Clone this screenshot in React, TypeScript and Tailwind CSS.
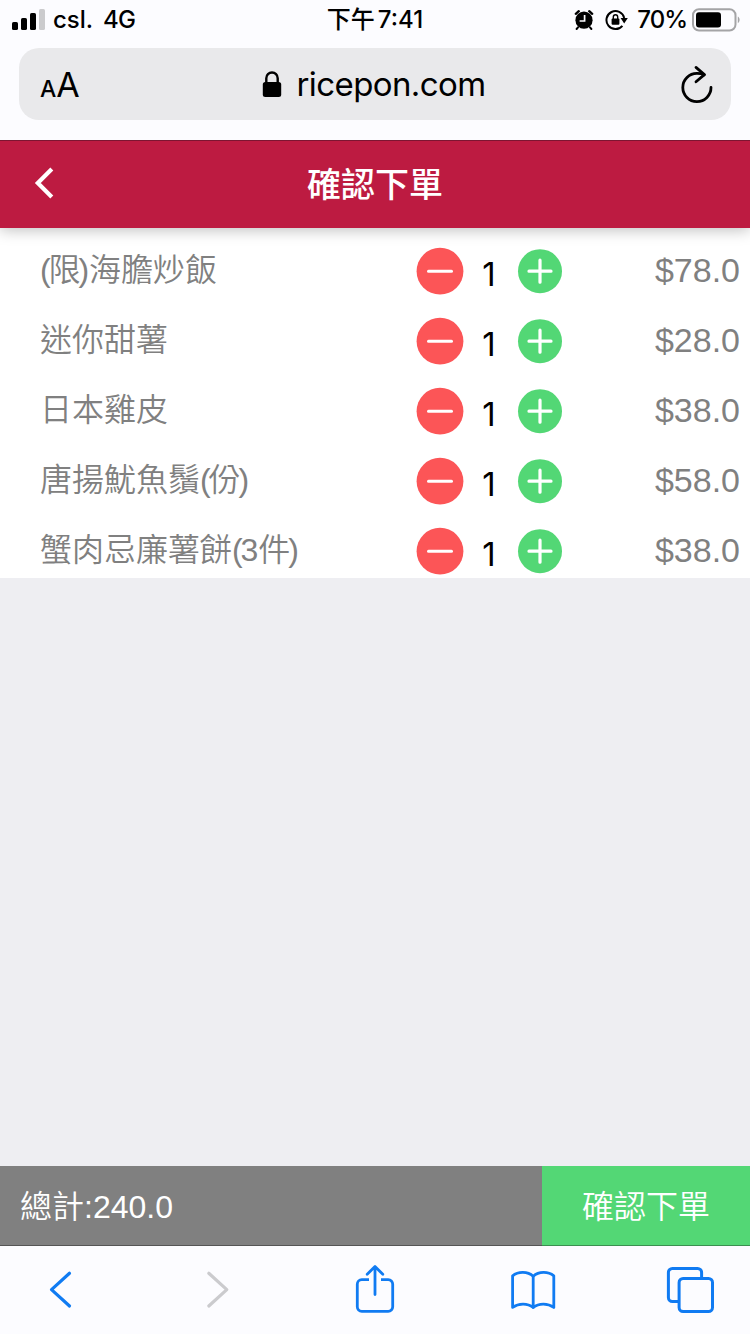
type OrderItem = {
  id: number;
  name: string;
  qty: number;
  price: number;
};

const items: OrderItem[] = [
  { id: 1, name: "(限)海膽炒飯", qty: 1, price: 78 },
  { id: 2, name: "迷你甜薯", qty: 1, price: 28 },
  { id: 3, name: "日本雞皮", qty: 1, price: 38 },
  { id: 4, name: "唐揚魷魚鬚(份)", qty: 1, price: 58 },
  { id: 5, name: "蟹肉忌廉薯餅(3件)", qty: 1, price: 38 },
];

function StatusBar() {
  return (
    <div className="grid h-10 grid-cols-3 items-center text-2xl font-medium text-black">
      <div className="flex items-center pl-3">
        <svg width="34" height="22" viewBox="0 0 34 22" className="shrink-0">
          <rect x="0" y="13" width="6" height="8" rx="1.6" />
          <rect x="9" y="9" width="6" height="12" rx="1.6" />
          <rect x="18" y="4" width="6" height="17" rx="1.6" />
          <rect x="27" y="0" width="6" height="21" rx="1.6" fill="#cbcbcd" />
        </svg>
        <span className="ml-[7px]">csl.</span>
        <span className="ml-2.5 tracking-[-0.8px]">4G</span>
      </div>
      <div className="flex items-center justify-center">
        <span>下午</span>
        <span className="ml-[3px]">7:41</span>
      </div>
      <div className="flex items-center justify-end pr-[9px]">
        <svg width="20" height="22" viewBox="0 0 20 22" className="mr-[11px] shrink-0">
          <circle cx="10" cy="11.2" r="8.6" />
          <path d="M1.8 4.8 4.8 2.2M18.2 4.8 15.2 2.2" stroke="#000" strokeWidth="2.4" strokeLinecap="round" />
          <path d="m4 18.4-1.4 1.6M16 18.4l1.4 1.6" stroke="#000" strokeWidth="2" strokeLinecap="round" />
          <path d="M10.6 6v6H5.6" fill="none" stroke="#fcfcff" strokeWidth="1.7" />
        </svg>
        <svg width="23" height="22" viewBox="0 0 23 22" className="mr-[9px] shrink-0">
          <path d="M17.4 16.8A9 9 0 1 1 19.2 8.9" fill="none" stroke="#000" strokeWidth="2" />
          <path d="M15.6 9h7.2L19.2 14.6z" />
          <rect x="6.6" y="9.6" width="7.8" height="6.2" rx="1" />
          <path d="M8.3 10V8a2.2 2.2 0 0 1 4.4 0v2" fill="none" stroke="#000" strokeWidth="1.4" />
        </svg>
        <span className="tracking-[-1px]">70%</span>
        <svg width="49" height="24" viewBox="0 0 49 24" className="ml-[5px] shrink-0">
          <rect x="1" y="1.2" width="42.5" height="21.3" rx="6" fill="none" stroke="#a4a4a6" strokeWidth="2" />
          <rect x="4" y="4.2" width="25" height="15.4" rx="3" />
          <path d="M45.8 8.5c2.4 1.2 2.4 5.5 0 6.7z" fill="#a4a4a6" />
        </svg>
      </div>
    </div>
  );
}

function AddressBar() {
  return (
    <div className="mx-[19px] mt-2 flex h-[72px] items-center justify-between rounded-[20px] bg-[#e9e9eb] pr-[17px] pl-[21px] text-black">
      <div className="flex w-[60px] items-baseline pt-0.5 leading-none">
        <span className="text-[23px] font-medium">A</span>
        <span className="text-[34px]">A</span>
      </div>
      <div className="flex items-center">
        <svg width="20" height="28" viewBox="0 0 20 28" className="mr-[15px]">
          <rect x="0.8" y="12" width="18.4" height="15" rx="2.5" />
          <path d="M4.3 13V8.2a5.7 5.7 0 0 1 11.4 0V13" fill="none" stroke="#000" strokeWidth="2.4" />
        </svg>
        <span className="text-[33px] leading-none tracking-[-0.6px]">ricepon.com</span>
      </div>
      <div className="flex w-[67px] justify-end">
        <svg width="34" height="38" viewBox="0 0 34 38" fill="none" stroke="#000" strokeWidth="2.8" strokeLinecap="round" strokeLinejoin="round">
          <path d="M31 22.4A14.1 14.1 0 1 1 17 8.4c2.6 0 5 .4 7.2 1.3" />
          <path d="m16 2.4 8.4 7.2-8.4 7.2" />
        </svg>
      </div>
    </div>
  );
}

function Header() {
  return (
    <header className="z-10 flex h-[88px] shrink-0 items-center border-t border-[#7d1531] bg-[#bd1b41] shadow-[0_2px_14px_rgba(0,0,0,0.26)]">
      <svg width="20" height="32" viewBox="0 0 20 32" className="mb-1 ml-[34px]" fill="none" stroke="#fff" strokeWidth="4.2">
        <path d="M17.8 2 3.8 16l14 14" />
      </svg>
      <h1 className="flex-1 pr-[54px] text-center text-[34px] leading-none font-medium text-white">確認下單</h1>
    </header>
  );
}

function ItemName({ name }: { name: string }) {
  return (
    <span className="w-[376px] pb-0.5 text-[32px] leading-none font-[350]">
      {name.split(/([()])/).map((part, i) => {
        if (part === "(") {
          return (
            <span key={i} className="tracking-[-2.2px]">
              {part}
            </span>
          );
        }
        if (part === ")") {
          return (
            <span key={i} className="-ml-0.5 tracking-[-0.2px]">
              {part}
            </span>
          );
        }
        return part;
      })}
    </span>
  );
}

function OrderRow({ item }: { item: OrderItem }) {
  return (
    <li className="flex h-[70px] items-center pt-4 pr-2.5 pl-10 text-[#808080]">
      <ItemName name={item.name} />
      <button className="flex size-12 items-center justify-center">
        <svg width="48" height="48" viewBox="0 0 48 48">
          <circle cx="24" cy="24.2" r="23.4" fill="#fc5557" />
          <path d="M12.5 24.2h23" stroke="#fff" strokeWidth="3" strokeLinecap="round" />
        </svg>
      </button>
      <span className="w-[50px] pt-1.5 text-center font-['Inter',sans-serif] text-[33px] leading-none text-black">
        {item.qty}
      </span>
      <button className="flex size-12 items-center justify-center">
        <svg width="48" height="48" viewBox="0 0 48 48">
          <circle cx="26" cy="24.2" r="22" fill="#53d775" />
          <path d="M15 24.2h22M26 13.2v22" stroke="#fff" strokeWidth="3.2" strokeLinecap="round" />
        </svg>
      </button>
      <span className="flex-1 pb-0.5 text-right text-[34px] leading-none">${item.price.toFixed(1)}</span>
    </li>
  );
}

function Footer() {
  const total = items.reduce((sum, item) => sum + item.qty * item.price, 0);

  return (
    <footer className="flex h-20 shrink-0 text-[32px] leading-none text-white">
      <div className="flex w-[542px] items-center border-b border-[#555] bg-[#808080] pt-[3px] pl-5">
        <span>
          <span className="font-[350]">總計</span>:{total.toFixed(1)}
        </span>
      </div>
      <button className="flex flex-1 items-center justify-center border-b border-[#3b8f50] bg-[#53d775] pt-[3px] font-[350]">
        確認下單
      </button>
    </footer>
  );
}

function Toolbar() {
  return (
    <nav className="flex h-[88px] shrink-0 items-center justify-between bg-[#fcfcff] px-9 text-[#107bf2]">
      <svg width="48" height="56" viewBox="0 0 48 56" fill="none" stroke="currentColor" strokeWidth="3.2" strokeLinecap="round" strokeLinejoin="round">
        <path d="M33.5 11.3 15.5 27.6l18 16.4" />
      </svg>
      <svg width="48" height="56" viewBox="0 0 48 56" fill="none" stroke="#cbcbce" strokeWidth="3.2" strokeLinecap="round" strokeLinejoin="round">
        <path d="m14.8 11.3 18 16.3-18 16.4" />
      </svg>
      <svg width="48" height="56" viewBox="0 0 48 56" fill="none" stroke="currentColor" strokeWidth="2.8" strokeLinejoin="round">
        <path d="M18 17.7h-7.2a4.5 4.5 0 0 0-4.5 4.5v22.6a4.5 4.5 0 0 0 4.5 4.5h26.4a4.5 4.5 0 0 0 4.5-4.5V22.2a4.5 4.5 0 0 0-4.5-4.5H30" />
        <path d="M24 32.6V4.8M16.2 12.2 24 4.6l7.8 7.6" strokeLinecap="round" />
      </svg>
      <svg width="48" height="56" viewBox="0 0 48 56" fill="none" stroke="currentColor" strokeWidth="2.8" strokeLinecap="round" strokeLinejoin="round">
        <path d="M24.2 14.2c-5.6-5-15-5-20.6-.4v31.6c6-4.4 15-4.4 20.6 0 5.6-4.4 14.6-4.4 20.6 0V13.8c-5.6-4.6-15-4.6-20.6.4z" />
        <path d="M24.2 14.4v31" />
      </svg>
      <svg width="48" height="56" viewBox="0 0 48 56" fill="none" stroke="currentColor" strokeWidth="3">
        <path d="M13 39.6H6.4a4 4 0 0 1-4-4V10.4a4 4 0 0 1 4-4h25.2a4 4 0 0 1 4 4v6" />
        <rect x="13.1" y="16.4" width="33.4" height="33.2" rx="4" />
      </svg>
    </nav>
  );
}

export default function App() {
  return (
    <div className="flex h-[1334px] w-[750px] flex-col overflow-hidden bg-[#eeeef2] font-['Liberation_Sans','Noto_Sans_CJK_TC',sans-serif]">
      <div className="z-20 h-[140px] shrink-0 bg-[#fcfcff] font-['Inter','Noto_Sans_CJK_TC',sans-serif]">
        <StatusBar />
        <AddressBar />
      </div>
      <Header />
      <main className="flex-1">
        <ul className="bg-white">
          {items.map((item) => (
            <OrderRow key={item.id} item={item} />
          ))}
        </ul>
      </main>
      <Footer />
      <Toolbar />
    </div>
  );
}
